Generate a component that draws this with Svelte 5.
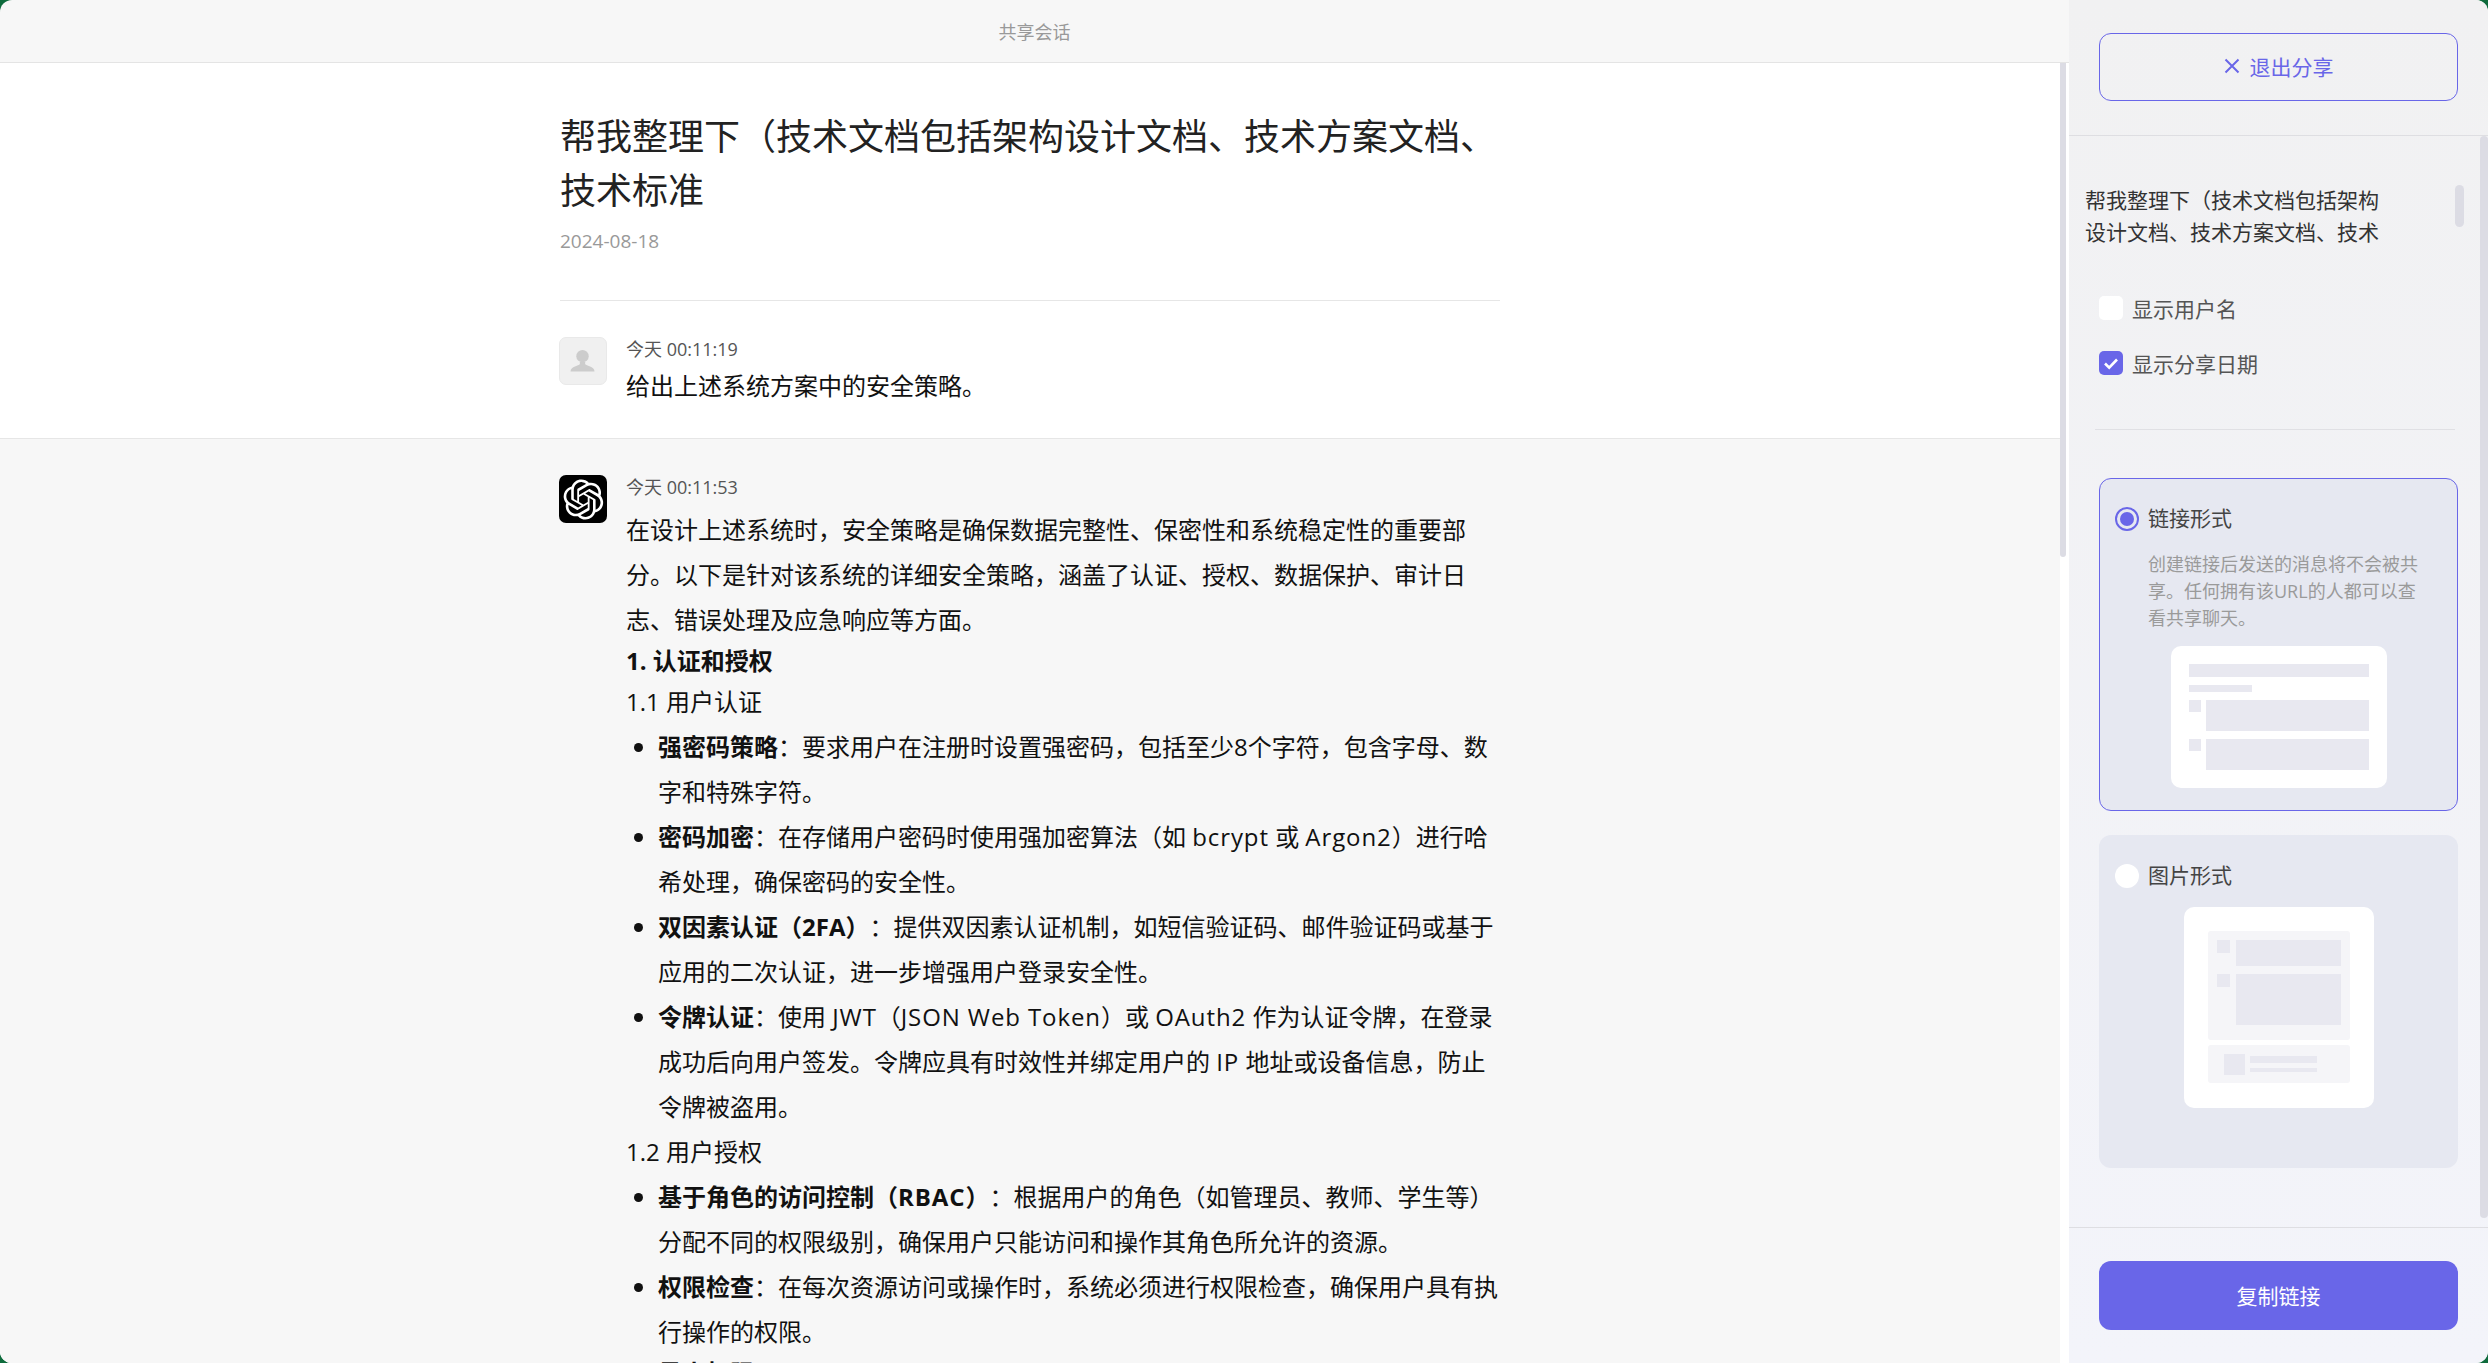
<script>
  const linkBars = [
    { x: 18, y: 18, w: 180, h: 13 },
    { x: 18, y: 39, w: 63, h: 7 },
    { x: 18, y: 54, w: 12, h: 12 },
    { x: 35, y: 54, w: 163, h: 31 },
    { x: 18, y: 93, w: 12, h: 12 },
    { x: 35, y: 93, w: 163, h: 31 }
  ];
  const sections = [
    { sub: '1.1 用户认证', items: [
      ['强密码策略', '：要求用户在注册时设置强密码，包括至少8个字符，包含字母、数字和特殊字符。'],
      ['密码加密', '：在存储用户密码时使用强加密算法（如 bcrypt 或 Argon2）进行哈希处理，确保密码的安全性。'],
      ['双因素认证（2FA）', '：提供双因素认证机制，如短信验证码、邮件验证码或基于应用的二次认证，进一步增强用户登录安全性。'],
      ['令牌认证', '：使用 JWT（JSON Web Token）或 OAuth2 作为认证令牌，在登录成功后向用户签发。令牌应具有时效性并绑定用户的 IP 地址或设备信息，防止令牌被盗用。']
    ]},
    { sub: '1.2 用户授权', items: [
      ['基于角色的访问控制（RBAC）', '：根据用户的角色（如管理员、教师、学生等）分配不同的权限级别，确保用户只能访问和操作其角色所允许的资源。'],
      ['权限检查', '：在每次资源访问或操作时，系统必须进行权限检查，确保用户具有执行操作的权限。']
    ]}
  ];

  // latin words run a little wider than the cjk around them
  function tokens(text) {
    return text.split(/(\b[A-Za-z][A-Za-z0-9]*(?: [A-Za-z][A-Za-z0-9]*)*)/).map((t, i) => ({ t, latin: i % 2 === 1 }));
  }
</script>

{#snippet mixed(text)}{#each tokens(text) as p}{#if p.latin}<span class="latin">{p.t}</span>{:else}{p.t}{/if}{/each}{/snippet}

<div class="app">
  <div class="main">
    <div class="topbar">共享会话</div>
    <div class="scroll">
      <div class="thread">
        <section class="intro">
          <h1>帮我整理下（技术文档包括架构设计文档、技术方案文档、技术标准</h1>
          <div class="date">2024-08-18</div>
          <div class="rule"></div>
          <div class="msg user">
            <div class="avatar gray">
              <svg viewBox="0 0 48 48" width="48" height="48"><circle cx="23.500" cy="19" r="6.500" fill="#ccc"/><path d="M11 35c0-3 2-4 4-5l5-2c1-.5 1-2 .5-3h6c-.5 1-.5 2.500.5 3l5 2c2 1 4 2 4 5z" fill="#ccc"/></svg>
            </div>
            <div class="body">
              <div class="time">今天 00:11:19</div>
              <div class="question">给出上述系统方案中的安全策略。</div>
            </div>
          </div>
        </section>
        <section class="answer">
          <div class="msg">
            <div class="avatar black">
              <svg viewBox="0 0 41 41" width="41" height="41"><path fill="#fff" d="M37.5324 16.8707C37.9808 15.5241 38.1363 14.0974 37.9886 12.6859C37.8409 11.2744 37.3934 9.91076 36.676 8.68622C35.6126 6.83404 33.9882 5.3676 32.0373 4.4985C30.0864 3.62941 27.9098 3.40259 25.8215 3.85078C24.8796 2.7893 23.7219 1.94125 22.4257 1.36341C21.1295 0.785575 19.7249 0.491269 18.3058 0.500197C16.1708 0.495044 14.0893 1.16803 12.3614 2.42214C10.6335 3.67624 9.34853 5.44666 8.6917 7.47815C7.30085 7.76286 5.98686 8.3414 4.8377 9.17505C3.68854 10.0087 2.73073 11.0782 2.02839 12.312C0.956464 14.1591 0.498905 16.2988 0.721698 18.4228C0.944492 20.5467 1.83612 22.5449 3.268 24.1293C2.81966 25.4759 2.66413 26.9026 2.81182 28.3141C2.95951 29.7256 3.40701 31.0892 4.12437 32.3138C5.18791 34.1659 6.8123 35.6322 8.76321 36.5013C10.7141 37.3704 12.8907 37.5973 14.979 37.1492C15.9208 38.2107 17.0786 39.0587 18.3747 39.6366C19.6709 40.2144 21.0755 40.5087 22.4946 40.4998C24.6307 40.5054 26.7133 39.8321 28.4418 38.5772C30.1704 37.3223 31.4556 35.5506 32.1119 33.5179C33.5027 33.2332 34.8167 32.6547 35.9659 31.821C37.115 30.9874 38.0728 29.9178 38.7752 28.684C39.8458 26.8371 40.3023 24.6979 40.0789 22.5748C39.8556 20.4517 38.9639 18.4544 37.5324 16.8707ZM22.4978 37.8849C20.7443 37.8874 19.0459 37.2733 17.6994 36.1501C17.7601 36.117 17.8666 36.0586 17.936 36.0161L25.9004 31.4156C26.1003 31.3019 26.2663 31.137 26.3813 30.9378C26.4964 30.7386 26.5563 30.5124 26.5549 30.2825V19.0542L29.9213 20.998C29.9389 21.0068 29.9541 21.0198 29.9656 21.0359C29.977 21.052 29.9842 21.0707 29.9867 21.0902V30.3889C29.9842 32.375 29.1946 34.2791 27.7909 35.6841C26.3872 37.0892 24.4838 37.8806 22.4978 37.8849ZM6.39227 31.0064C5.51397 29.4888 5.19742 27.7107 5.49804 25.9832C5.55718 26.0187 5.66048 26.0818 5.73461 26.1244L13.699 30.7248C13.8975 30.8408 14.1233 30.902 14.3532 30.902C14.583 30.902 14.8088 30.8408 15.0073 30.7248L24.731 25.1103V28.9979C24.7321 29.0177 24.7283 29.0376 24.7199 29.0556C24.7115 29.0736 24.6988 29.0893 24.6829 29.1012L16.6317 33.7497C14.9096 34.7416 12.8643 35.0097 10.9447 34.4954C9.02506 33.9811 7.38785 32.7263 6.39227 31.0064ZM4.29707 13.6194C5.17156 12.0998 6.55279 10.9364 8.19885 10.3327C8.19885 10.4013 8.19491 10.5228 8.19491 10.6071V19.808C8.19351 20.0378 8.25334 20.2638 8.36823 20.4629C8.48312 20.6619 8.64893 20.8267 8.84863 20.9404L18.5723 26.5542L15.206 28.4979C15.1894 28.5089 15.1703 28.5155 15.1505 28.5173C15.1307 28.5191 15.1107 28.516 15.0924 28.5082L7.04046 23.8557C5.32135 22.8601 4.06716 21.2235 3.55289 19.3046C3.03862 17.3858 3.30624 15.3413 4.29707 13.6194ZM31.955 20.0556L22.2312 14.4411L25.5976 12.4981C25.6142 12.4872 25.6333 12.4805 25.6531 12.4787C25.6729 12.4769 25.6928 12.4801 25.7111 12.4879L33.7631 17.1364C34.9967 17.849 36.0017 18.8982 36.6606 20.1613C37.3194 21.4244 37.6047 22.849 37.4832 24.2684C37.3617 25.6878 36.8382 27.0432 35.9743 28.1759C35.1103 29.3086 33.9415 30.1717 32.6047 30.6641C32.6047 30.5947 32.6047 30.4733 32.6047 30.3889V21.188C32.6066 20.9586 32.5474 20.7328 32.4332 20.5338C32.319 20.3348 32.154 20.1698 31.955 20.0556ZM35.3055 15.0128C35.2464 14.9765 35.1431 14.9142 35.069 14.8717L27.1045 10.2712C26.906 10.1554 26.6803 10.0943 26.4504 10.0943C26.2206 10.0943 25.9948 10.1554 25.7963 10.2712L16.0726 15.8858V11.9982C16.0715 11.9783 16.0753 11.9585 16.0837 11.9405C16.0921 11.9225 16.1048 11.9068 16.1207 11.8949L24.1719 7.25025C25.4053 6.53903 26.8158 6.19376 28.2383 6.25482C29.6608 6.31589 31.0364 6.78077 32.2044 7.59508C33.3723 8.40939 34.2842 9.53945 34.8334 10.8531C35.3826 12.1667 35.5464 13.6095 35.3055 15.0128ZM14.2424 21.9419L10.8752 19.9981C10.8576 19.9893 10.8423 19.9763 10.8309 19.9602C10.8195 19.9441 10.8122 19.9254 10.8098 19.9058V10.6071C10.8107 9.18295 11.2173 7.78848 11.9819 6.58696C12.7466 5.38544 13.8377 4.42659 15.1275 3.82264C16.4173 3.21869 17.8524 2.99464 19.2649 3.1767C20.6775 3.35876 22.0089 3.93941 23.1034 4.85067C23.0427 4.88379 22.937 4.94215 22.8668 4.98473L14.9024 9.58517C14.7025 9.69878 14.5366 9.86356 14.4215 10.0626C14.3065 10.2616 14.2466 10.4877 14.2479 10.7175L14.2424 21.9419ZM16.071 17.9991L20.4018 15.4978L24.7325 17.9975V22.9985L20.4018 25.4983L16.071 22.9985V17.9991Z"/></svg>
            </div>
            <div class="body">
              <div class="time">今天 00:11:53</div>
              <div class="content">
                <p class="lead">在设计上述系统时，安全策略是确保数据完整性、保密性和系统稳定性的重要部分。以下是针对该系统的详细安全策略，涵盖了认证、授权、数据保护、审计日志、错误处理及应急响应等方面。</p>
                <h3>1. 认证和授权</h3>
                {#each sections as s}
                  <p>{s.sub}</p>
                  <ul>
                    {#each s.items as it}
                      <li><strong>{@render mixed(it[0])}</strong>{@render mixed(it[1])}</li>
                    {/each}
                  </ul>
                {/each}
                <h4>最小权限</h4>
              </div>
            </div>
          </div>
        </section>
      </div>
      <div class="scrollbar"></div>
    </div>
  </div>

  <aside class="side">
    <div class="side-top">
      <button class="exit">
        <svg viewBox="0 0 16 16" width="16" height="16"><path d="M1.500 1.500l13 13M14.500 1.500l-13 13" stroke="#6966e8" stroke-width="2" fill="none"/></svg>
        退出分享
      </button>
    </div>
    <div class="side-mid">
      <div class="side-title-wrap">
        <div class="side-title">帮我整理下（技术文档包括架构设计文档、技术方案文档、技术</div>
        <div class="title-thumb"></div>
      </div>
      <label class="check"><span class="box"></span>显示用户名</label>
      <label class="check"><span class="box on">
        <svg viewBox="0 0 24 24" width="24" height="24"><path d="M6 12.500l4.200 4.200L18 8.500" stroke="#fff" stroke-width="2.600" fill="none"/></svg>
      </span>显示分享日期</label>
      <div class="side-rule"></div>

      <div class="card active">
        <div class="radio-row"><span class="radio on"></span>链接形式</div>
        <div class="desc">创建链接后发送的消息将不会被共享。任何拥有该URL的人都可以查看共享聊天。</div>
        <div class="preview link">
          {#each linkBars as b}
            <i class="ph" style="left:{b.x}px;top:{b.y}px;width:{b.w}px;height:{b.h}px"></i>
          {/each}
        </div>
      </div>

      <div class="card second">
        <div class="radio-row"><span class="radio"></span>图片形式</div>
        <div class="preview image">
          <div class="pic-top">
            <div class="pic-row"><i class="sq"></i><i class="fill r1"></i></div>
            <div class="pic-row"><i class="sq"></i><i class="fill r2"></i></div>
          </div>
          <div class="pic-bottom">
            <i class="qr"></i>
            <div class="pic-lines"><i class="l1"></i><i class="l2"></i></div>
          </div>
        </div>
      </div>
      <div class="side-scrollbar"></div>
    </div>
    <div class="side-bottom">
      <button class="copy">复制链接</button>
    </div>
  </aside>
</div>

<style>
  :global(body) {
    margin: 0;
    background: #0e6b3c;
    font-family: "Open Sans", "Noto Sans CJK SC", sans-serif;
  }
  .app {
    display: flex;
    height: 1363px;
    overflow: hidden;
    border-radius: 12px;
    background: #f7f7f7;
  }
  .main {
    width: 2069px;
    display: flex;
    flex-direction: column;
    flex: none;
  }
  .topbar {
    height: 62px;
    border-bottom: 1px solid #e4e4e4;
    display: flex;
    align-items: center;
    justify-content: center;
    font-size: 18px;
    color: #999;
  }
  .scroll {
    flex: 1;
    display: flex;
    min-height: 0;
    background: #fff;
  }
  .thread {
    width: 2060px;
    flex: none;
    overflow: hidden;
  }
  .scrollbar {
    width: 6px;
    height: 494px;
    background: #dcdce4;
    border-radius: 0 0 3px 3px;
  }
  .intro {
    background: #fff;
    padding: 47px 0 0 0;
    height: 376px;
    box-sizing: border-box;
    border-bottom: 1px solid #e6e6e6;
  }
  h1 {
    margin: 0 0 0 560px;
    width: 940px;
    font-size: 36px;
    font-weight: 400;
    line-height: 54px;
    color: #222;
  }
  .date {
    margin: 9px 0 0 560px;
    font-size: 19px;
    line-height: 28px;
    color: #999;
  }
  .rule {
    margin: 45px 0 0 560px;
    width: 940px;
    height: 1px;
    background: #e6e6e6;
  }
  .msg {
    display: flex;
    margin-left: 559px;
    width: 942px;
  }
  .user {
    margin-top: 36px;
  }
  .avatar {
    width: 48px;
    height: 48px;
    border-radius: 7px;
    flex: none;
    margin-right: 19px;
    display: flex;
    align-items: center;
    justify-content: center;
    box-sizing: border-box;
  }
  .avatar.gray {
    background: #f0f0f0;
    border: 1px solid #e9e9e9;
    overflow: hidden;
  }
  .avatar.black {
    background: #000;
  }
  .body {
    flex: 1;
    min-width: 0;
    margin-top: -3px;
  }
  .time {
    font-size: 18px;
    line-height: 28px;
    color: #555;
    padding-top: 1px;
    margin-bottom: -1px;
  }
  .question {
    font-size: 24px;
    line-height: 45px;
    color: #111;
    margin-top: 1px;
  }
  .answer {
    background: #f7f7f7;
    padding-top: 36px;
    height: 1000px;
  }
  .content {
    margin-top: 7px;
    font-size: 24px;
    line-height: 45px;
    color: #111;
    text-spacing-trim: space-all;
  }
  .latin {
    letter-spacing: 0.9px;
  }
  .content p {
    margin: 0;
  }
  .content h3 {
    margin: 0;
    font-size: 24px;
    line-height: 37px;
    font-weight: 700;
  }
  .content h4 {
    margin: 0 0 0 32px;
    font-size: 24px;
    line-height: 37px;
    font-weight: 700;
  }
  ul {
    margin: 0;
    padding-left: 32px;
  }
  li strong {
    font-weight: 700;
  }
  .side {
    width: 419px;
    flex: none;
    display: flex;
    flex-direction: column;
    background: linear-gradient(#f1f1f2, #f3f4fa);
  }
  .side-top {
    height: 136px;
    border-bottom: 1px solid #dedee2;
    padding: 33px 30px 0;
    box-sizing: border-box;
    flex: none;
  }
  button {
    font-family: inherit;
    cursor: pointer;
  }
  .exit {
    width: 359px;
    height: 68px;
    border: 1px solid #6966e8;
    border-radius: 12px;
    background: transparent;
    color: #6966e8;
    font-size: 21px;
    display: flex;
    align-items: center;
    justify-content: center;
    gap: 10px;
    padding: 0 0 2px;
  }
  .side-mid {
    flex: 1;
    min-height: 0;
    position: relative;
    padding: 0 30px;
  }
  .side-title-wrap {
    margin: 48px 0 0 -14px;
    height: 64px;
    position: relative;
  }
  .side-title {
    width: 300px;
    font-size: 21px;
    line-height: 32px;
    color: #333;
  }
  .title-thumb {
    position: absolute;
    left: 370px;
    top: 1px;
    width: 9px;
    height: 42px;
    border-radius: 5px;
    background: #dcdce4;
  }
  .check {
    display: flex;
    align-items: center;
    font-size: 21px;
    color: #555;
    height: 24px;
  }
  .check + .check {
    margin-top: 31px;
  }
  .side-title-wrap + .check {
    margin-top: 48px;
  }
  .box {
    width: 24px;
    height: 24px;
    border-radius: 5px;
    background: #fff;
    margin: 0 9px 0 0;
    flex: none;
    display: block;
  }
  .box svg {
    display: block;
  }
  .box.on {
    background: #6966e8;
  }
  .side-rule {
    height: 1px;
    background: #e0e0e4;
    margin: 54px 3px 0 -4px;
  }
  .card {
    width: 359px;
    box-sizing: border-box;
    background: #e6e8f1;
    border-radius: 12px;
    position: relative;
  }
  .card.active {
    height: 333px;
    margin-top: 48px;
    border: 1px solid #6966e8;
    padding: 28px 15px 0;
  }
  .card.second {
    height: 333px;
    margin-top: 24px;
    padding: 29px 16px 0;
  }
  .radio-row {
    display: flex;
    align-items: center;
    font-size: 21px;
    line-height: 22px;
    color: #444;
    height: 22px;
    padding-bottom: 2px;
  }
  .radio {
    width: 24px;
    height: 24px;
    border-radius: 50%;
    background: #fff;
    margin: 0 9px -2px 0;
    box-sizing: border-box;
    flex: none;
  }
  .radio.on {
    border: 2px solid #6966e8;
    background: #e6e8f1;
    position: relative;
  }
  .radio.on::after {
    content: "";
    position: absolute;
    left: 3px;
    top: 3px;
    width: 14px;
    height: 14px;
    border-radius: 50%;
    background: #6966e8;
  }
  .desc {
    margin: 20px 0 0 33px;
    width: 285px;
    font-size: 18px;
    line-height: 27px;
    color: #9a9a9a;
  }
  .preview {
    background: #fff;
    border-radius: 10px;
    position: relative;
  }
  .preview.link {
    width: 216px;
    height: 142px;
    margin: 14px 0 0 56px;
  }
  .ph {
    position: absolute;
    display: block;
    background: #e8e8f0;
  }
  .preview.image {
    width: 190px;
    height: 201px;
    margin: 19px 0 0 69px;
    padding: 24px 24px 0;
    box-sizing: border-box;
  }
  .pic-top {
    height: 109px;
    background: #f5f5f8;
    border-radius: 3px;
    padding: 9px;
    box-sizing: border-box;
  }
  .pic-row {
    display: flex;
    gap: 6px;
    margin-bottom: 8px;
  }
  .sq {
    width: 13px;
    height: 13px;
    background: #e8e8f0;
    flex: none;
    display: block;
  }
  .fill {
    flex: 1;
    background: #e8e8f0;
    display: block;
  }
  .r1 { height: 26px; }
  .r2 { height: 51px; }
  .pic-bottom {
    height: 38px;
    margin-top: 5px;
    background: #f5f5f8;
    border-radius: 3px;
    display: flex;
    align-items: center;
    padding-left: 16px;
    gap: 5px;
  }
  .qr {
    display: block;
    width: 21px;
    height: 21px;
    background: #e8e8f0;
  }
  .pic-lines {
    width: 67px;
  }
  .pic-lines i {
    display: block;
    background: #e8e8f0;
  }
  .l1 { height: 7px; margin-bottom: 5px; }
  .l2 { height: 4px; }
  .side-scrollbar {
    position: absolute;
    right: 0;
    top: 0;
    width: 8px;
    height: 1082px;
    border-radius: 4px;
    background: #dcdce4;
  }
  .side-bottom {
    height: 136px;
    flex: none;
    border-top: 1px solid #dedee2;
    padding: 33px 30px 0;
    box-sizing: border-box;
  }
  .copy {
    width: 359px;
    height: 69px;
    border: 0;
    border-radius: 12px;
    background: #6966e8;
    color: #fff;
    font-size: 21px;
    padding: 0 0 2px;
  }
</style>
